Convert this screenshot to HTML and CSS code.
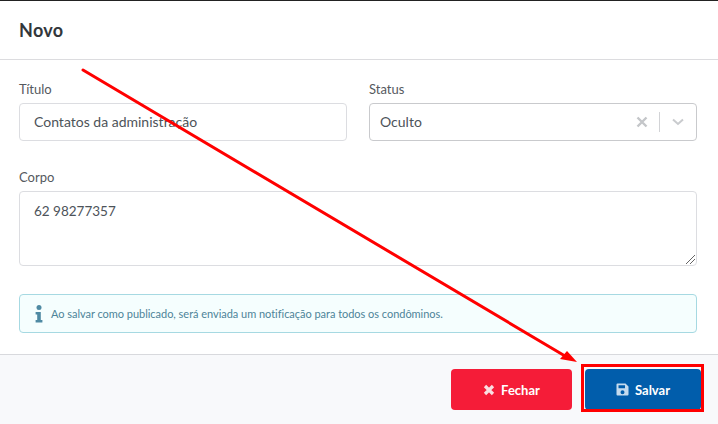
FILE: index.html
```html
<!DOCTYPE html>
<html>
<head>
    <title>Novo</title>
    <link rel="stylesheet" href="styles.css">
</head>
<body>
    <div class="modal">
        <div class="modal-header">Novo</div>

        <div class="modal-body">
            <div class="row">
                <div class="field">
                    <label>Título</label>
                    <div class="input">Contatos da administração</div>
                </div>
                <div class="field">
                    <label>Status</label>
                    <div class="input select">
                        <span class="select-value">Oculto</span>
                        <svg class="select-clear" width="12" height="12" viewBox="0 0 12 12"><path d="M1.5 1.5l9 9M10.5 1.5l-9 9"/></svg>
                        <span class="select-sep"></span>
                        <svg class="select-arrow" width="12" height="8" viewBox="0 0 12 8"><path d="M1 1.5l5 4.5 5-4.5"/></svg>
                    </div>
                </div>
            </div>

            <div class="field">
                <label>Corpo</label>
                <div class="input textarea">
                    62 98277357
                    <svg class="grip" width="9" height="9" viewBox="0 0 9 9"><path d="M0 9l9-9M4 9l5-5"/></svg>
                </div>
            </div>

            <div class="alert">
                <svg class="alert-icon" width="8" height="18" viewBox="0 0 8 18"><circle cx="4" cy="2.6" r="2.5"/><path d="M0.6 7h5.2v8h1.6v2.6H0.6V15h1.6V9.500H0.6z"/></svg>
                Ao salvar como publicado, será enviada um notificação para todos os condôminos.
            </div>
        </div>

        <div class="modal-footer">
            <button class="btn btn-red">
                <svg width="12" height="12" viewBox="0 0 12 12"><path d="M2 2l8 8M10 2l-8 8"/></svg>
                Fechar
            </button>
            <button class="btn btn-blue">
                <svg width="13" height="13" viewBox="0 0 13 13"><path fill-rule="evenodd" d="M1.500 0.500h8l3 3v8a1 1 0 0 1-1 1h-10a1 1 0 0 1-1-1v-10a1 1 0 0 1 1-1zM2.500 2.300v3h6.500v-3zM6.500 7.300a2 2 0 1 0 0 4 2 2 0 0 0 0-4z"/></svg>
                Salvar
            </button>
        </div>
    </div>

    <!-- anotacao por cima da tela -->
    <svg class="annotation" width="718" height="424" viewBox="0 0 718 424">
        <path class="arrow-line" d="M83 70L565 356"/>
        <path class="arrow-head" d="M577 362L560 359L567 351z"/>
        <rect class="arrow-box" x="582.500" y="365.500" width="120" height="45"/>
    </svg>
</body>
</html>
```

FILE: styles.css
```css
* { box-sizing: border-box; }
html, body {
    margin: 0;
    height: 424px;
    overflow: hidden;
}
body {
    font-family: "Lato", "Noto Sans", sans-serif;
    background: white;
    color: #4a4f55;
}
.modal {
    height: 424px;
    display: flex;
    flex-direction: column;
    border-top: 1px solid #222;
}
.modal-header {
    height: 59px;
    padding: 18px 19px 0;
    font-size: 18px;
    line-height: 22px;
    font-weight: 700;
    letter-spacing: 0.3px;
    color: #33373b;
    border-bottom: 1px solid #dcdcdf;
}
.modal-body {
    flex: 1;
    padding: 20px 21px 0 19px;
}
.row {
    display: flex;
    gap: 22px;
    margin-bottom: 27px;
}
.field { flex: 1; }
label {
    display: block;
    font-size: 13px;
    line-height: 18px;
    margin-bottom: 5px;
    color: #55595e;
}
.input {
    height: 38px;
    padding: 0 14px;
    border: 1px solid #dcdde1;
    border-radius: 4px;
    font-size: 14px;
    line-height: 36px;
    color: #4d5359;
}
.select {
    display: flex;
    align-items: center;
    padding: 0 12px 0 10px;
    border-color: #c9cacd;
}
.select-value { flex: 1; }
.select-clear path {
    stroke: #c4c6c9;
    stroke-width: 2.400;
    fill: none;
}
.select-sep {
    width: 1px;
    height: 20px;
    margin: 0 12px 0 11px;
    background: #d2d3d6;
}
.select-arrow path {
    stroke: #c9cbce;
    stroke-width: 2;
    fill: none;
}
.textarea {
    position: relative;
    height: 75px;
    font-size: 13.5px;
    line-height: 18px;
    padding-top: 10px;
}
.grip {
    position: absolute;
    right: 1px;
    bottom: 1px;
}
.grip path {
    stroke: #666;
    stroke-width: 1;
    fill: none;
}
.alert {
    display: flex;
    align-items: center;
    gap: 8px;
    height: 39px;
    margin-top: 28px;
    padding: 0 15px;
    background: #f5fefe;
    border: 1px solid #a6d9e2;
    border-radius: 4px;
    font-size: 11px;
    letter-spacing: -0.03px;
    color: #4d8499;
}
.alert-icon { fill: #4f8aa3; }
.modal-footer {
    height: 70px;
    display: flex;
    justify-content: flex-end;
    gap: 13px;
    padding: 14px 17px 0 0;
    background: #f8f9fb;
    border-top: 1px solid #d8d9dd;
}
.btn {
    display: flex;
    align-items: center;
    justify-content: center;
    gap: 6px;
    height: 41px;
    border: none;
    border-radius: 4px;
    color: white;
    font-family: inherit;
    font-size: 13px;
    font-weight: 700;
}
.btn-red { width: 121px; background: #f51c38; }
.btn-red svg path {
    stroke: #f9dfe2;
    stroke-width: 3.200;
    fill: none;
}
.btn-blue { width: 116px; background: #015dab; }
.btn-blue svg path { fill: #c5dbee; }
.annotation {
    position: absolute;
    top: 0;
    left: 0;
}
.arrow-line {
    stroke: #ff0000;
    stroke-width: 3;
    stroke-linecap: round;
    fill: none;
}
.arrow-head { fill: #ff0000; }
.arrow-box {
    stroke: #ff0000;
    stroke-width: 3;
    fill: none;
}
```
